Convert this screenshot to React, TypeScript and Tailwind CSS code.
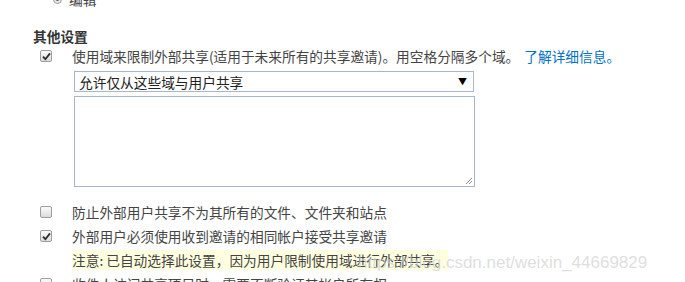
import React from 'react';

const font = { fontFamily: '"Noto Sans CJK SC", "Liberation Sans", sans-serif' };

function Box({ checked }: { checked?: boolean }) {
  return (
    <span className="w-[12px] h-[12px] shrink-0 rounded-[2px] border border-[#9e9e9e] bg-gradient-to-b from-[#fbfbfb] to-[#dcdcdc] flex items-center justify-center">
      {checked && (
        <svg width="9" height="9" viewBox="0 0 9 9">
          <path d="M1 4.6 L3.4 7.2 L8 1.4" fill="none" stroke="#2b2b2b" strokeWidth="1.8" />
        </svg>
      )}
    </span>
  );
}

function Row({ checked, children }: { checked?: boolean; children: React.ReactNode }) {
  return (
    <div className="flex items-center h-[24px] pl-[40px]">
      <Box checked={checked} />
      <div className="ml-[20px] whitespace-nowrap">{children}</div>
    </div>
  );
}

export default function App() {
  return (
    <div
      className="relative w-[685px] h-[282px] overflow-hidden bg-white text-[13.7px] leading-[18px] text-[#444]"
      style={font}
    >
      <div className="-mt-[8px] flex items-center h-[14px] pl-[53px]">
        <span className="w-[9px] h-[9px] rounded-full border border-[#9e9e9e] bg-[#e6e6e6] flex items-center justify-center">
          <span className="w-[3px] h-[3px] rounded-full bg-[#555]" />
        </span>
        <span className="ml-[7px]">编辑</span>
      </div>

      <div className="mt-[21px] pl-[33px] font-bold text-[#333]">其他设置</div>

      <div className="-mt-[1px]">
        <Row checked>
          使用域来限制外部共享(适用于未来所有的共享邀请)。用空格分隔多个域。
          <span className="ml-[5px] text-[#0072c6]">了解详细信息。</span>
        </Row>
      </div>

      <div className="pl-[74px]">
        <div className="mt-[3px] w-[400px] h-[21px] border border-[#a6b7ca] flex items-center justify-between pl-[4px] pr-[6px] text-[#222]">
          <span>允许仅从这些域与用户共享</span>
          <span className="text-[9px] text-black">▼</span>
        </div>
        <div className="relative mt-[4px] w-[401px] h-[91px] border border-[#a6b7ca]">
          <svg className="absolute right-[1px] bottom-[1px]" width="9" height="9" viewBox="0 0 9 9">
            <path d="M8 2 L2 8 M8 5 L5 8" stroke="#8a8a8a" strokeWidth="1" />
          </svg>
        </div>
      </div>

      <div className="mt-[13px]">
        <Row>防止外部用户共享不为其所有的文件、文件夹和站点</Row>
        <Row checked>外部用户必须使用收到邀请的相同帐户接受共享邀请</Row>
        <div className="pl-[72px] h-[24px] flex items-center">
          <span className="bg-[#ffffe0] py-[1px] whitespace-nowrap">
            注意: 已自动选择此设置，因为用户限制使用域进行外部共享。
          </span>
        </div>
        <Row>收件人访问共享项目时，需要不断验证其帐户所有权</Row>
      </div>

      <div
        className="absolute left-[358px] top-[253px] text-[17px] leading-[20px] text-[#d0d0d0]/70 whitespace-nowrap"
        style={{ fontFamily: '"Liberation Sans", Arial, sans-serif' }}
      >
        https://blog.csdn.net/weixin_44669829
      </div>
    </div>
  );
}
